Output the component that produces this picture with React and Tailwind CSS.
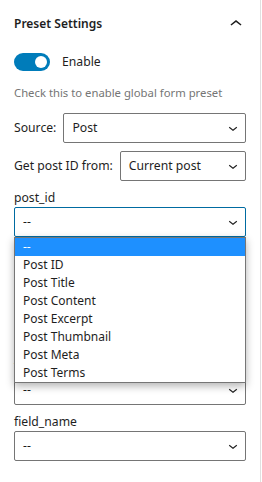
import React from 'react';

const font = { fontFamily: '"Noto Sans", "Open Sans", sans-serif' };

const ChevronDown = () => (
  <svg width="18" height="18" viewBox="0 0 24 24" className="absolute right-[3px] top-1/2 -translate-y-1/2 text-[#1e1e1e]">
    <path d="M17.5 11.6L12 16l-5.5-4.4.9-1.2L12 14l4.6-3.6 1 1.2z" fill="currentColor" />
  </svg>
);

const Select = ({ value, focused, className = '' }) => (
  <div
    className={`relative h-[30px] rounded-[2px] bg-white flex items-center pl-[8px] text-[12.2px] text-[#1e1e1e] ${
      focused ? 'border-[1.5px] border-[#006ba1]' : 'border border-[#757575]'
    } ${className}`}
  >
    <span>{value}</span>
    <ChevronDown />
  </div>
);

const Field = ({ label, value, focused }) => (
  <div className="pt-[8px]">
    <div className="text-[12.2px] leading-[18px] text-[#1e1e1e]">{label}</div>
    <Select value={value} focused={focused} />
  </div>
);

const options = ['--', 'Post ID', 'Post Title', 'Post Content', 'Post Excerpt', 'Post Thumbnail', 'Post Meta', 'Post Terms'];

export default function App() {
  return (
    <div className="w-[261px] min-h-[482px] bg-white border-r border-[#e0e0e0]" style={font}>
      <div className="px-[14px]">
        <div className="h-[48px] flex items-center justify-between">
          <span className="text-[12px] font-semibold text-[#1e1e1e]">Preset Settings</span>
          <svg width="24" height="24" viewBox="0 0 24 24" className="-mr-[2px] text-[#1e1e1e]">
            <path d="M6.5 12.4L12 8l5.5 4.4-.9 1.2L12 10l-4.6 3.6-1-1.2z" fill="currentColor" />
          </svg>
        </div>

        <div className="mt-[5px] flex items-center gap-[12px]">
          <div className="w-[36px] h-[18px] rounded-full bg-[#007cba] flex items-center justify-end pr-[3px]">
            <div className="w-[12px] h-[12px] rounded-full bg-white" />
          </div>
          <span className="text-[12.2px] text-[#1e1e1e]">Enable</span>
        </div>

        <div className="mt-[14px] text-[11.3px] leading-[16px] text-[#757575]">
          Check this to enable global form preset
        </div>

        <div className="mt-[12px] flex items-center gap-[7px]">
          <span className="text-[12.2px] text-[#1e1e1e]">Source:</span>
          <Select value="Post" className="flex-1" />
        </div>

        <div className="mt-[8px] flex items-center gap-[7px]">
          <span className="text-[12.2px] text-[#1e1e1e]">Get post ID from:</span>
          <Select value="Current post" className="flex-1" />
        </div>

        <Field label="post_id" value="--" focused />

        <div className="relative">
          <div className="absolute left-0 right-0 top-0 z-10 bg-white border border-[#767676] shadow-[0_3px_8px_rgba(0,0,0,0.3)]">
            {options.map((o, i) => (
              <div
                key={o}
                className={`h-[18px] leading-[18px] pl-[8px] text-[12px] ${
                  i === 0 ? 'bg-[#1e90ff] text-white' : 'text-[#1e1e1e]'
                }`}
              >
                {o}
              </div>
            ))}
          </div>
          <Field label="post_field" value="--" />
          <Field label="meta_key" value="--" />
          <Field label="term_key" value="--" />
        </div>

        <Field label="field_name" value="--" />
      </div>
    </div>
  );
}
